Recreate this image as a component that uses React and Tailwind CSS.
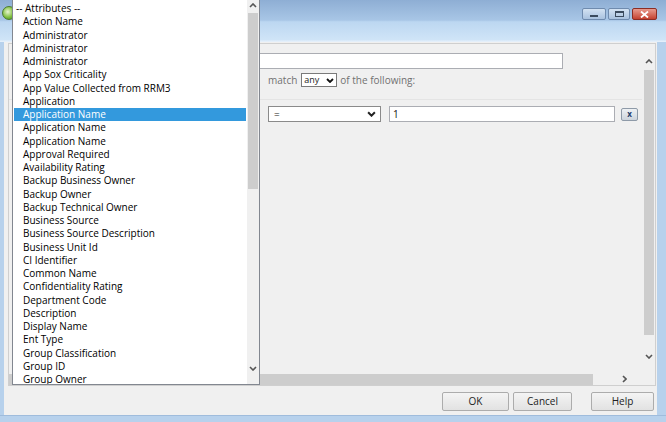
import React from 'react';

const ITEMS = [
  'Action Name',
  'Administrator',
  'Administrator',
  'Administrator',
  'App Sox Criticality',
  'App Value Collected from RRM3',
  'Application',
  'Application Name',
  'Application Name',
  'Application Name',
  'Approval Required',
  'Availability Rating',
  'Backup Business Owner',
  'Backup Owner',
  'Backup Technical Owner',
  'Business Source',
  'Business Source Description',
  'Business Unit Id',
  'CI Identifier',
  'Common Name',
  'Confidentiality Rating',
  'Department Code',
  'Description',
  'Display Name',
  'Ent Type',
  'Group Classification',
  'Group ID',
  'Group Owner',
];

const SELECTED = 7;

function Chevron({ dir = 'down', color = '#555', w = 8, h = 5, sw = 1.6 }) {
  const pts = {
    down: '1,1 4,4 7,1',
    up: '1,4 4,1 7,4',
  }[dir];
  if (dir === 'right') {
    return (
      <svg width={h} height={w} viewBox="0 0 5 8">
        <polyline points="1,1 4,4 1,7" fill="none" stroke={color} strokeWidth={sw} />
      </svg>
    );
  }
  return (
    <svg width={w} height={h} viewBox="0 0 8 5">
      <polyline points={pts} fill="none" stroke={color} strokeWidth={sw} />
    </svg>
  );
}

function WinButton({ children, className }) {
  return (
    <button className={`h-[19px] border border-[#acacac] rounded-[2px] bg-gradient-to-b from-[#f4f4f4] to-[#e2e2e2] text-[10px] text-[#222] ${className}`}>
      {children}
    </button>
  );
}

export default function App() {
  return (
    <div className="relative w-[666px] h-[422px] overflow-hidden bg-[#b7d1ec] font-['Open_Sans',sans-serif] text-[10px] text-black">

      {/* Title bar */}
      <div className="h-[42px] flex items-start justify-between pr-[9px] bg-[linear-gradient(to_bottom,#8eaed4_0%,#a8c6e6_48%,#bcd7f1_52%,#cfe4f7_94%,#e9f2fb_100%)]">
        <div className="mt-[6px] ml-[2px] w-[14px] h-[14px] rounded-full bg-[radial-gradient(circle_at_40%_40%,#e8f5d0_0%,#7fbf3f_55%,#3d7d22_100%)] border border-[#4a7a30]" />
        <div className="flex gap-[2px] mt-[8px]">
          <div className="w-[24px] h-[12px] rounded-[2px] border border-[#6f8bae] bg-gradient-to-b from-[#d3e2f2] to-[#a9c2df] flex items-end justify-center pb-[2px]">
            <div className="w-[8px] h-[2px] bg-[#3b4b5e]" />
          </div>
          <div className="w-[22px] h-[12px] rounded-[2px] border border-[#6f8bae] bg-gradient-to-b from-[#d3e2f2] to-[#a9c2df] flex items-center justify-center">
            <div className="w-[9px] h-[6px] border border-[#3b4b5e] border-t-2" />
          </div>
          <div className="w-[25px] h-[12px] rounded-[2px] border border-[#8c2d24] bg-gradient-to-b from-[#e79a8e] to-[#c4402f] flex items-center justify-center">
            <svg width="9" height="7" viewBox="0 0 9 7">
              <path d="M1 0.5 L8 6.5 M8 0.5 L1 6.5" stroke="#fff" strokeWidth="1.8" />
            </svg>
          </div>
        </div>
      </div>

      {/* Client area */}
      <div className="ml-[4px] mr-[9px] h-[373px] bg-[#f0f0f0] flex flex-col">

        {/* Panel */}
        <div className="mt-[1px] ml-[4px] mr-[1px] h-[343px] border border-[#cfcfcf] flex flex-col">
          <div className="flex flex-1 pt-[8px]">
            {/* content */}
            <div className="flex-1 flex flex-col">
              <div className="mt-[1px] h-[16px] ml-[131px] w-[423px] bg-white border border-[#abadb3]" />

              <div className="mt-[4px] h-[14px] ml-[259px] flex items-center gap-[3px] text-[#707070]">
                <span>match</span>
                <div className="ml-[1px] w-[36px] h-[14px] bg-white border border-[#7a7a7a] flex items-center justify-between px-[2px] text-[9px] text-[#222]">
                  <span>any</span>
                  <Chevron color="#111" w={8} h={5} sw={1.8} />
                </div>
                <span>of the following:</span>
              </div>

              <div className="mt-[12px] border-t border-[#e4e4e4]" />

              <div className="mt-[6px] h-[16px] ml-[259px] flex items-center">
                <div className="w-[113px] h-[16px] bg-white border border-[#8a8a8a] flex items-center justify-between pl-[5px] pr-[4px]">
                  <span className="text-[#222]">=</span>
                  <Chevron color="#222" w={9} h={6} sw={1.8} />
                </div>
                <div className="ml-[8px] w-[226px] h-[16px] bg-white border border-[#abadb3] flex items-center pl-[3px] text-[#111]">1</div>
                <div className="ml-[6px] w-[17px] h-[13px] rounded-[2px] border border-[#8e9aa8] bg-gradient-to-b from-[#eef1f4] to-[#cdd4dc] flex items-center justify-center text-[8px] font-bold text-[#1d3d6b] leading-none">x</div>
              </div>
            </div>

            {/* vertical scrollbar */}
            <div className="w-[13px] flex flex-col items-center">
              <div className="h-[18px] flex items-center justify-center"><Chevron dir="up" /></div>
              <div className="w-[10px] h-[265px] bg-[#cdcdcd]" />
              <div className="h-[12px]" />
              <div className="h-[18px] flex items-center justify-center"><Chevron /></div>
            </div>
          </div>

          {/* horizontal scrollbar */}
          <div className="h-[12px] flex">
            <div className="flex-1 bg-[#cdcdcd] mt-[1px]" />
            <div className="w-[19px]" />
            <div className="w-[24px] flex items-center justify-center"><Chevron dir="right" /></div>
            <div className="w-[19px]" />
          </div>
        </div>

        {/* Buttons */}
        <div className="mt-[6px] flex justify-end pr-[3px]">
          <WinButton className="w-[67px]">OK</WinButton>
          <WinButton className="ml-[4px] w-[59px]">Cancel</WinButton>
          <WinButton className="ml-[19px] w-[63px]">Help</WinButton>
        </div>
      </div>

      {/* bottom frame */}
      <div className="h-[7px] border-t border-[#9fbcdc] bg-[#b7d1ec]" />

      {/* Open dropdown list */}
      <div className="absolute left-[12px] top-0 w-[248px] h-[385px] bg-white border-x border-b border-[#828790] flex">
        <div className="flex-1 overflow-hidden pt-[2px]">
          <div className="h-[13.25px] leading-[13.25px] pl-[3px] whitespace-nowrap">-- Attributes --</div>
          {ITEMS.map((it, i) => (
            <div
              key={i}
              className={`h-[13.25px] leading-[13.25px] pl-[9px] mx-[1px] whitespace-nowrap ${i === SELECTED ? 'bg-[#3399dd] text-white' : ''}`}
            >
              {it}
            </div>
          ))}
        </div>
        <div className="w-[12px] flex flex-col items-center bg-[#f0f0f0]">
          <div className="h-[11px] flex items-center justify-center"><Chevron dir="up" /></div>
          <div className="mt-[2px] w-[10px] h-[176px] bg-[#cdcdcd]" />
          <div className="flex-1" />
          <div className="h-[16px] mb-[8px] flex items-center justify-center"><Chevron /></div>
        </div>
      </div>
    </div>
  );
}
